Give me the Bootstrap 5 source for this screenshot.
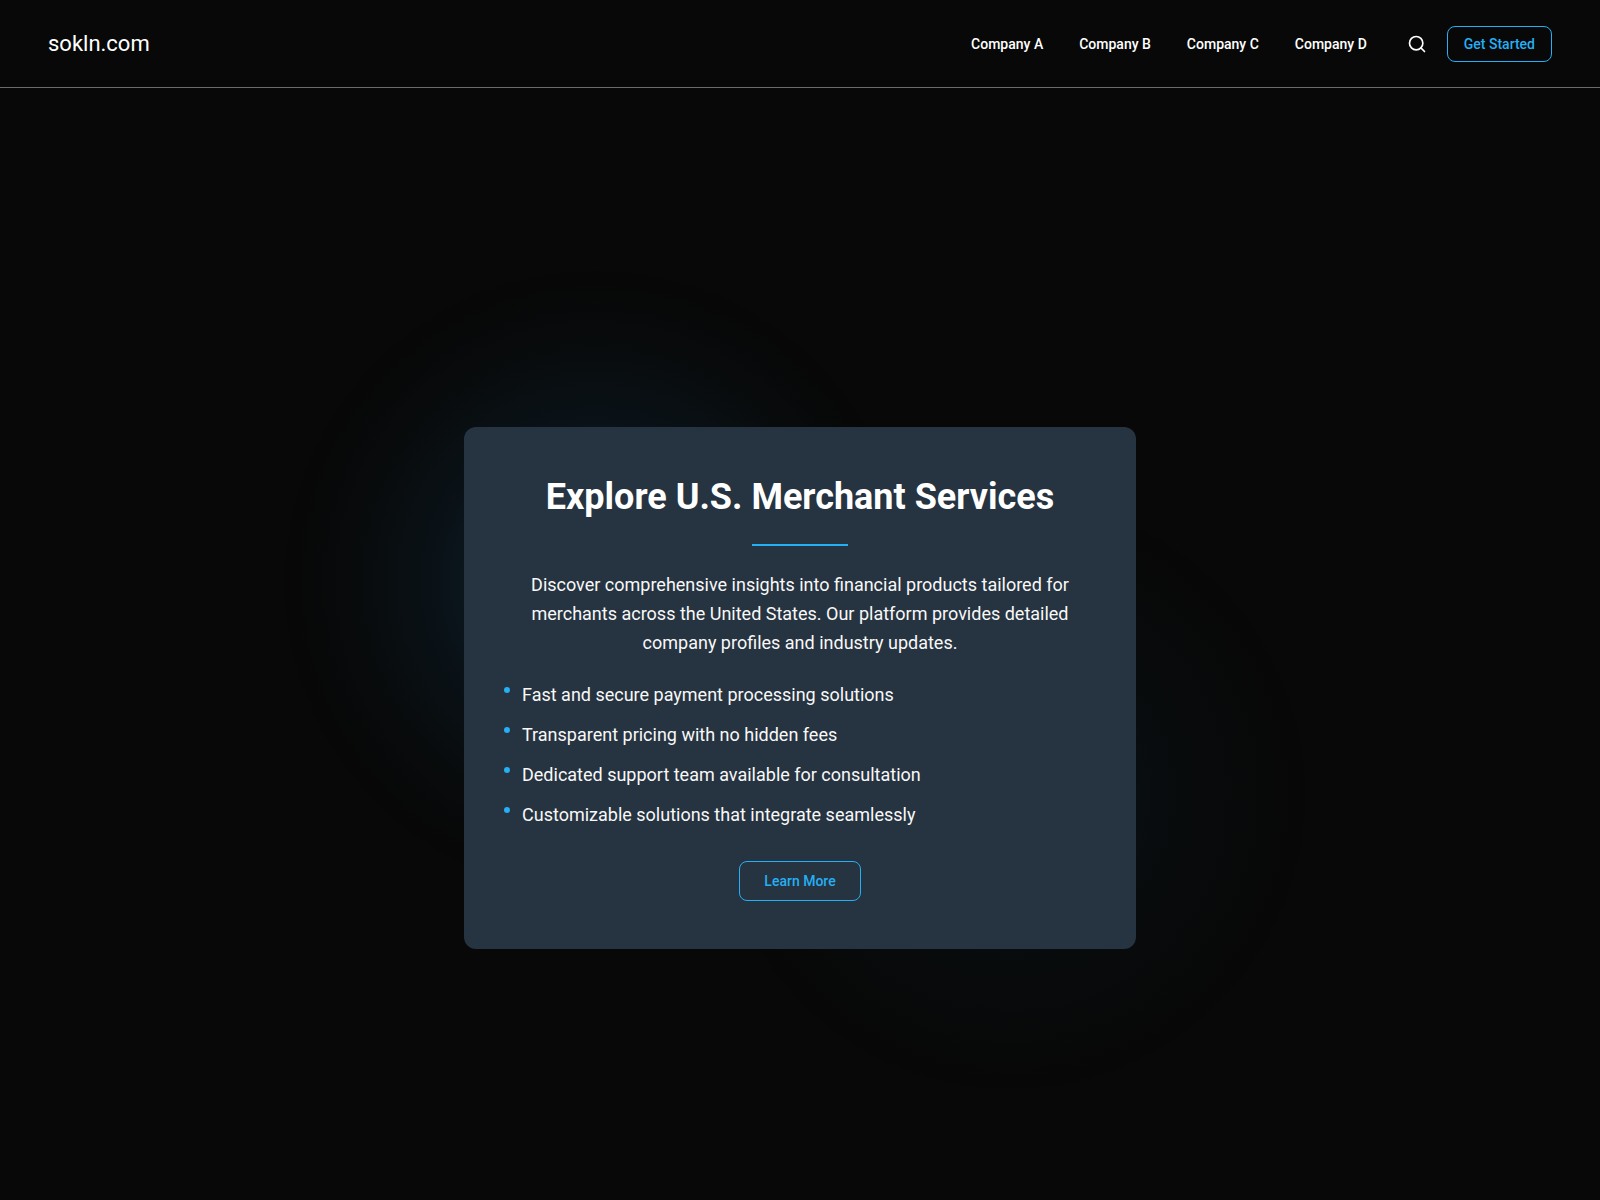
<!DOCTYPE html>
<html lang="en">
<head>
<meta charset="utf-8">
<meta name="viewport" content="width=device-width, initial-scale=1">
<title>sokln.com</title>
<link href="https://cdn.jsdelivr.net/npm/bootstrap@5.3.0/dist/css/bootstrap.min.css" rel="stylesheet">
<style>
:root { --accent: #25aff4; --panel: #263340; --ink: #080808; }
body { background: var(--ink); color: #fff; font-family: Roboto, sans-serif; }
.site-header { border-bottom: 1px solid #6b6b6b; min-height: 88px; }
.site-header .navbar-brand { font-size: 22px; line-height: 33px; font-weight: 400; color: #fff; }
.site-links { gap: 36px; }
.site-links .nav-link { font-size: 14px; line-height: 20px; font-weight: 500; color: #fff; }
.search-btn { width: 20px; height: 20px; line-height: 0; color: #fff; margin: 0 20px 0 40px; }
.btn-accent {
  --bs-btn-color: var(--accent); --bs-btn-border-color: var(--accent);
  --bs-btn-hover-color: var(--ink); --bs-btn-hover-bg: var(--accent); --bs-btn-hover-border-color: var(--accent);
  --bs-btn-font-size: 14px; --bs-btn-font-weight: 500; --bs-btn-line-height: 20px; --bs-btn-border-radius: 8px;
  --bs-btn-padding-x: 16px; --bs-btn-padding-y: 7px;
}
.btn-wide { --bs-btn-padding-x: 24px; --bs-btn-padding-y: 9px; }
.hero {
  background:
    radial-gradient(circle 316px at calc(50% - 204px) calc(50% - 106px), rgba(37,175,244,.18), rgba(30,150,230,.07) 50%, rgba(20,110,150,.03) 75%, rgba(0,0,0,.16) 97%, transparent),
    radial-gradient(circle 300px at calc(50% + 210px) calc(50% + 106px), rgba(37,175,244,.09), rgba(20,130,180,.03) 50%, rgba(10,80,110,.02) 75%, rgba(0,0,0,.14) 97%, transparent);
}
.hero-panel { max-width: 672px; background: var(--panel); border-radius: 12px; padding: 48px 40px; }
.hero-panel h1 { font-size: 36px; line-height: 45px; font-weight: 700; }
.rule { width: 96px; height: 2px; background: var(--accent); }
.intro, .features { font-size: 18px; line-height: 29px; color: #f8f8f8; }
.intro { max-width: 576px; }
.features { gap: 12px; margin-bottom: 32px; }
.features li { line-height: 28px; gap: 12px; }
.features li::before { content: ""; flex: none; width: 6px; height: 6px; margin-top: 6px; border-radius: 50%; background: var(--accent); }
</style>
</head>
<body>
<header class="site-header navbar navbar-expand px-5 py-0">
  <a class="navbar-brand p-0 m-0" href="#">sokln.com</a>
  <div class="d-flex align-items-center ms-auto">
    <nav aria-label="Companies">
      <ul class="site-links navbar-nav">
        <li><a class="nav-link p-0" href="#">Company A</a></li>
        <li><a class="nav-link p-0" href="#">Company B</a></li>
        <li><a class="nav-link p-0" href="#">Company C</a></li>
        <li><a class="nav-link p-0" href="#">Company D</a></li>
      </ul>
    </nav>
    <button class="search-btn btn border-0 p-0" type="button" aria-label="Search">
      <svg width="20" height="20" viewBox="0 0 24 24" fill="none" stroke="currentColor" stroke-width="2" stroke-linecap="round" aria-hidden="true"><circle cx="11" cy="11" r="8"/><path d="m21 21-4.3-4.3"/></svg>
    </button>
    <button class="btn btn-accent" type="button">Get Started</button>
  </div>
</header>
<main class="hero min-vh-100 d-flex align-items-center justify-content-center">
  <section class="hero-panel w-100 d-flex flex-column align-items-center">
    <h1 class="text-center mb-4">Explore U.S. Merchant Services</h1>
    <div class="rule mb-4"></div>
    <p class="intro text-center mb-4">Discover comprehensive insights into financial products tailored for merchants across the United States. Our platform provides detailed company profiles and industry updates.</p>
    <ul class="features list-unstyled align-self-stretch d-flex flex-column">
      <li class="d-flex">Fast and secure payment processing solutions</li>
      <li class="d-flex">Transparent pricing with no hidden fees</li>
      <li class="d-flex">Dedicated support team available for consultation</li>
      <li class="d-flex">Customizable solutions that integrate seamlessly</li>
    </ul>
    <button class="btn btn-accent btn-wide" type="button">Learn More</button>
  </section>
</main>
<script src="https://cdn.jsdelivr.net/npm/bootstrap@5.3.0/dist/js/bootstrap.bundle.min.js"></script>
</body>
</html>
